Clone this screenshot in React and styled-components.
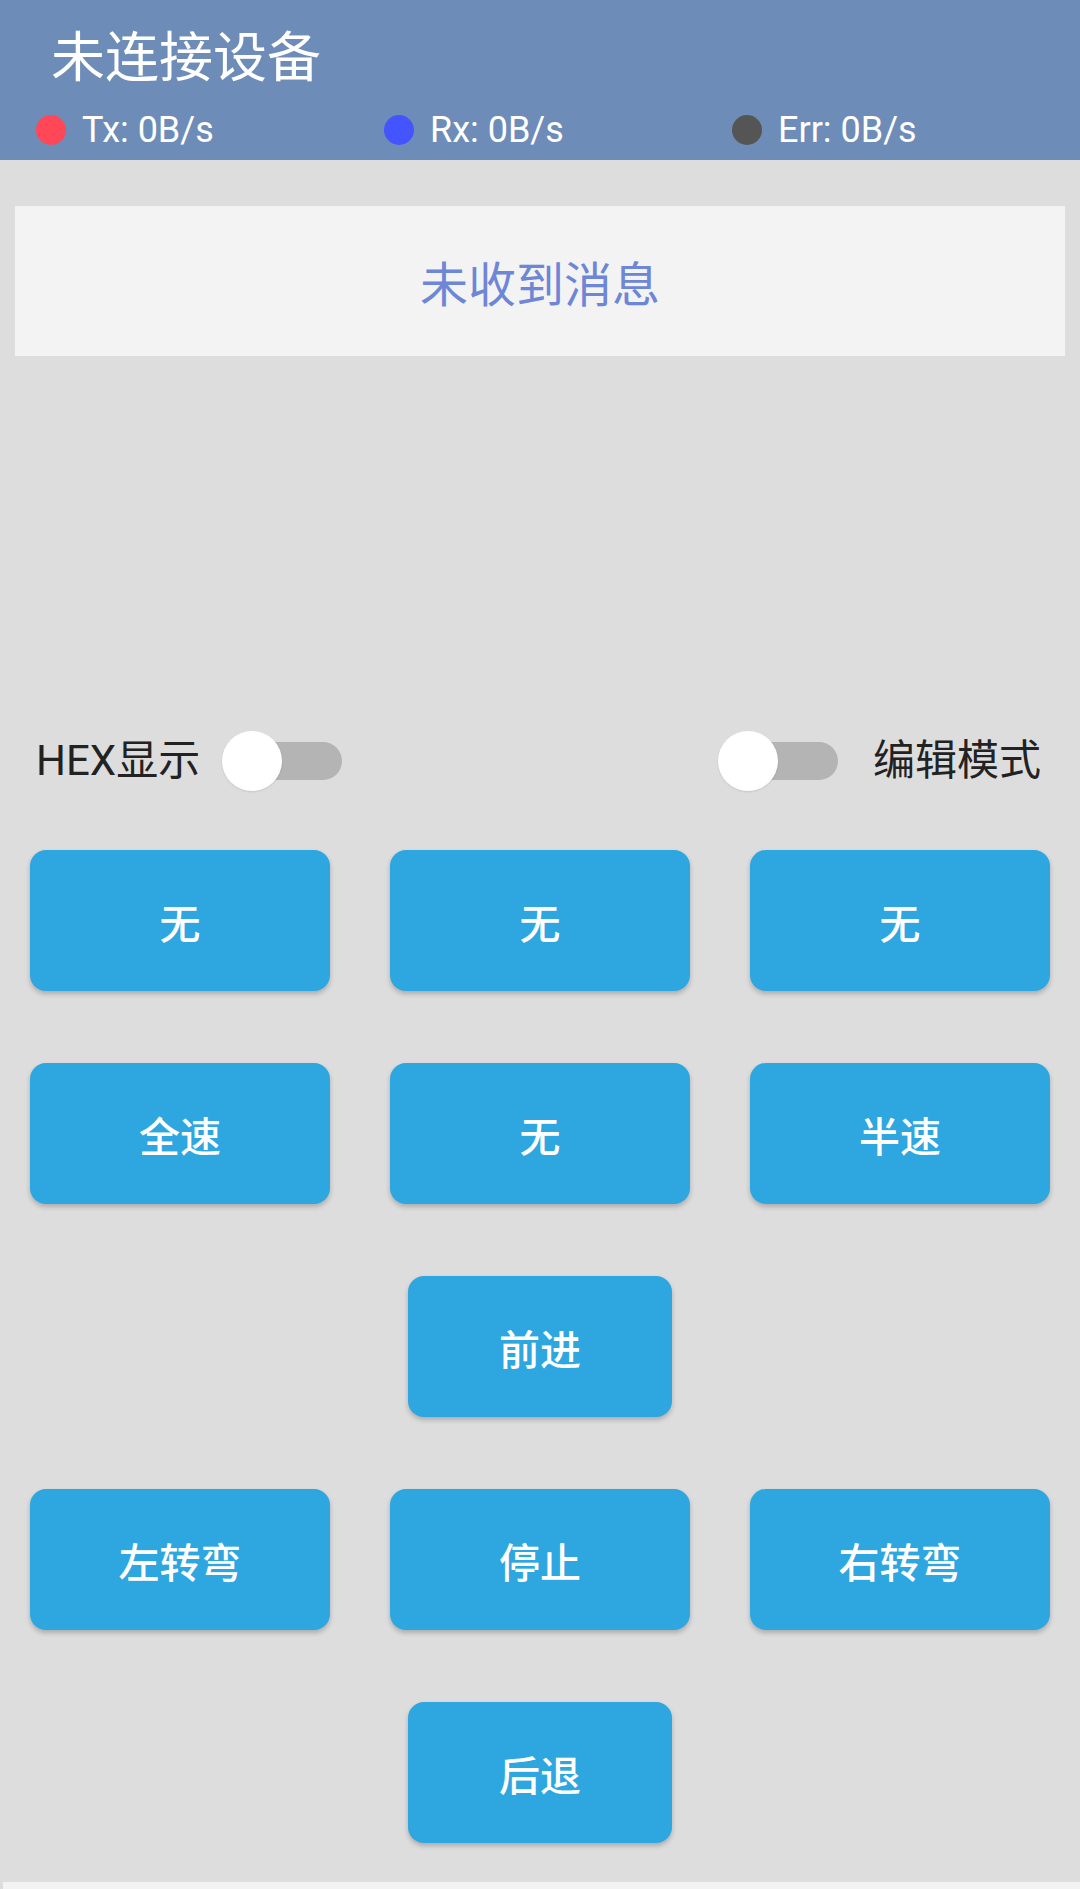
import styled, { createGlobalStyle } from "styled-components";

const GlobalStyle = createGlobalStyle`
  body {
    margin: 0;
    background: #dddddd;
    font-family: Roboto, "Noto Sans CJK SC", sans-serif;
  }
`;

const stats = [
  { label: "Tx: 0B/s", color: "#ff4757" },
  { label: "Rx: 0B/s", color: "#4455ff" },
  { label: "Err: 0B/s", color: "#555555" },
];

const rows = [
  ["无", "无", "无"],
  ["全速", "无", "半速"],
  ["前进"],
  ["左转弯", "停止", "右转弯"],
  ["后退"],
];

const Switch = () => (
  <SwitchBox>
    <Track />
    <Thumb />
  </SwitchBox>
);

const App = () => (
  <Page>
    <GlobalStyle />
    <Header>
      <Title>未连接设备</Title>
      <StatusRow>
        {stats.map((s) => (
          <StatusItem key={s.label}>
            <Dot $color={s.color} />
            <span>{s.label}</span>
          </StatusItem>
        ))}
      </StatusRow>
    </Header>

    <MessageBox>未收到消息</MessageBox>

    <ToggleRow>
      <ToggleGroup $gap={22}>
        <ToggleLabel>HEX显示</ToggleLabel>
        <Switch />
      </ToggleGroup>
      <ToggleGroup $gap={35}>
        <Switch />
        <ToggleLabel>编辑模式</ToggleLabel>
      </ToggleGroup>
    </ToggleRow>

    <Pad>
      {rows.map((row, i) =>
        row.length === 3 ? (
          <ButtonRow key={i}>
            {row.map((t, j) => (
              <PadButton key={j}>{t}</PadButton>
            ))}
          </ButtonRow>
        ) : (
          <SingleRow key={i}>
            <PadButton $narrow>{row[0]}</PadButton>
          </SingleRow>
        )
      )}
    </Pad>

    <BottomBar />
  </Page>
);

const Page = styled.div`
  min-height: 1889px;
  display: flex;
  flex-direction: column;
`;

const Header = styled.header`
  background: #6e8cb8;
  height: 160px;
  box-sizing: border-box;
  display: flex;
  flex-direction: column;
`;

const Title = styled.div`
  height: 108px;
  line-height: 108px;
  padding-left: 51px;
  color: #ffffff;
  font-family: "Noto Sans CJK SC", sans-serif;
  font-size: 54px;
`;

const StatusRow = styled.div`
  display: grid;
  grid-template-columns: repeat(3, 348px);
  padding-left: 36px;
  margin-top: 3px;
  height: 38px;
  align-items: center;
`;

const StatusItem = styled.div`
  display: flex;
  align-items: center;
  gap: 16px;
  color: #ffffff;
  font-family: Roboto, sans-serif;
  font-size: 36px;
  line-height: 38px;
`;

const Dot = styled.span`
  width: 30px;
  height: 30px;
  border-radius: 50%;
  background: ${(p) => p.$color};
  flex-shrink: 0;
`;

const MessageBox = styled.div`
  margin: 46px 15px 0;
  height: 150px;
  background: #f3f3f3;
  display: flex;
  align-items: center;
  justify-content: center;
  color: #6e86d6;
  font-family: "Noto Sans CJK SC", sans-serif;
  font-size: 48px;
`;

const ToggleRow = styled.div`
  margin-top: 375px;
  height: 60px;
  display: flex;
  justify-content: space-between;
  align-items: center;
  padding: 0 39px 0 36px;
`;

const ToggleGroup = styled.div`
  display: flex;
  align-items: center;
  gap: ${(p) => p.$gap}px;
`;

const ToggleLabel = styled.span`
  color: #222222;
  font-family: Roboto, "Noto Sans CJK SC", sans-serif;
  font-size: 42px;
  line-height: 60px;
`;

const SwitchBox = styled.div`
  position: relative;
  width: 120px;
  height: 60px;
`;

const Track = styled.div`
  position: absolute;
  left: 20px;
  top: 11px;
  width: 100px;
  height: 38px;
  border-radius: 19px;
  background: #b4b4b4;
`;

const Thumb = styled.div`
  position: absolute;
  left: 0;
  top: 0;
  width: 60px;
  height: 60px;
  border-radius: 50%;
  background: #ffffff;
  box-shadow: 0 1px 2px rgba(0, 0, 0, 0.1);
`;

const Pad = styled.div`
  margin-top: 59px;
  display: flex;
  flex-direction: column;
  gap: 72px;
  padding: 0 30px;
`;

const ButtonRow = styled.div`
  display: grid;
  grid-template-columns: repeat(3, 300px);
  column-gap: 60px;
`;

const SingleRow = styled.div`
  display: flex;
  justify-content: center;
`;

const PadButton = styled.button`
  width: ${(p) => (p.$narrow ? "264px" : "300px")};
  height: 141px;
  border: none;
  border-radius: 16px;
  background: #2ea6df;
  color: #ffffff;
  font-family: "Noto Sans CJK SC", sans-serif;
  font-size: 41px;
  font-weight: 500;
  box-shadow: 0 3px 5px rgba(0, 0, 0, 0.22);
  padding: 0;
  cursor: pointer;
`;

const BottomBar = styled.div`
  margin: 39px 0 0 3px;
  height: 20px;
  background: #f3f3f3;
`;

export default App;
